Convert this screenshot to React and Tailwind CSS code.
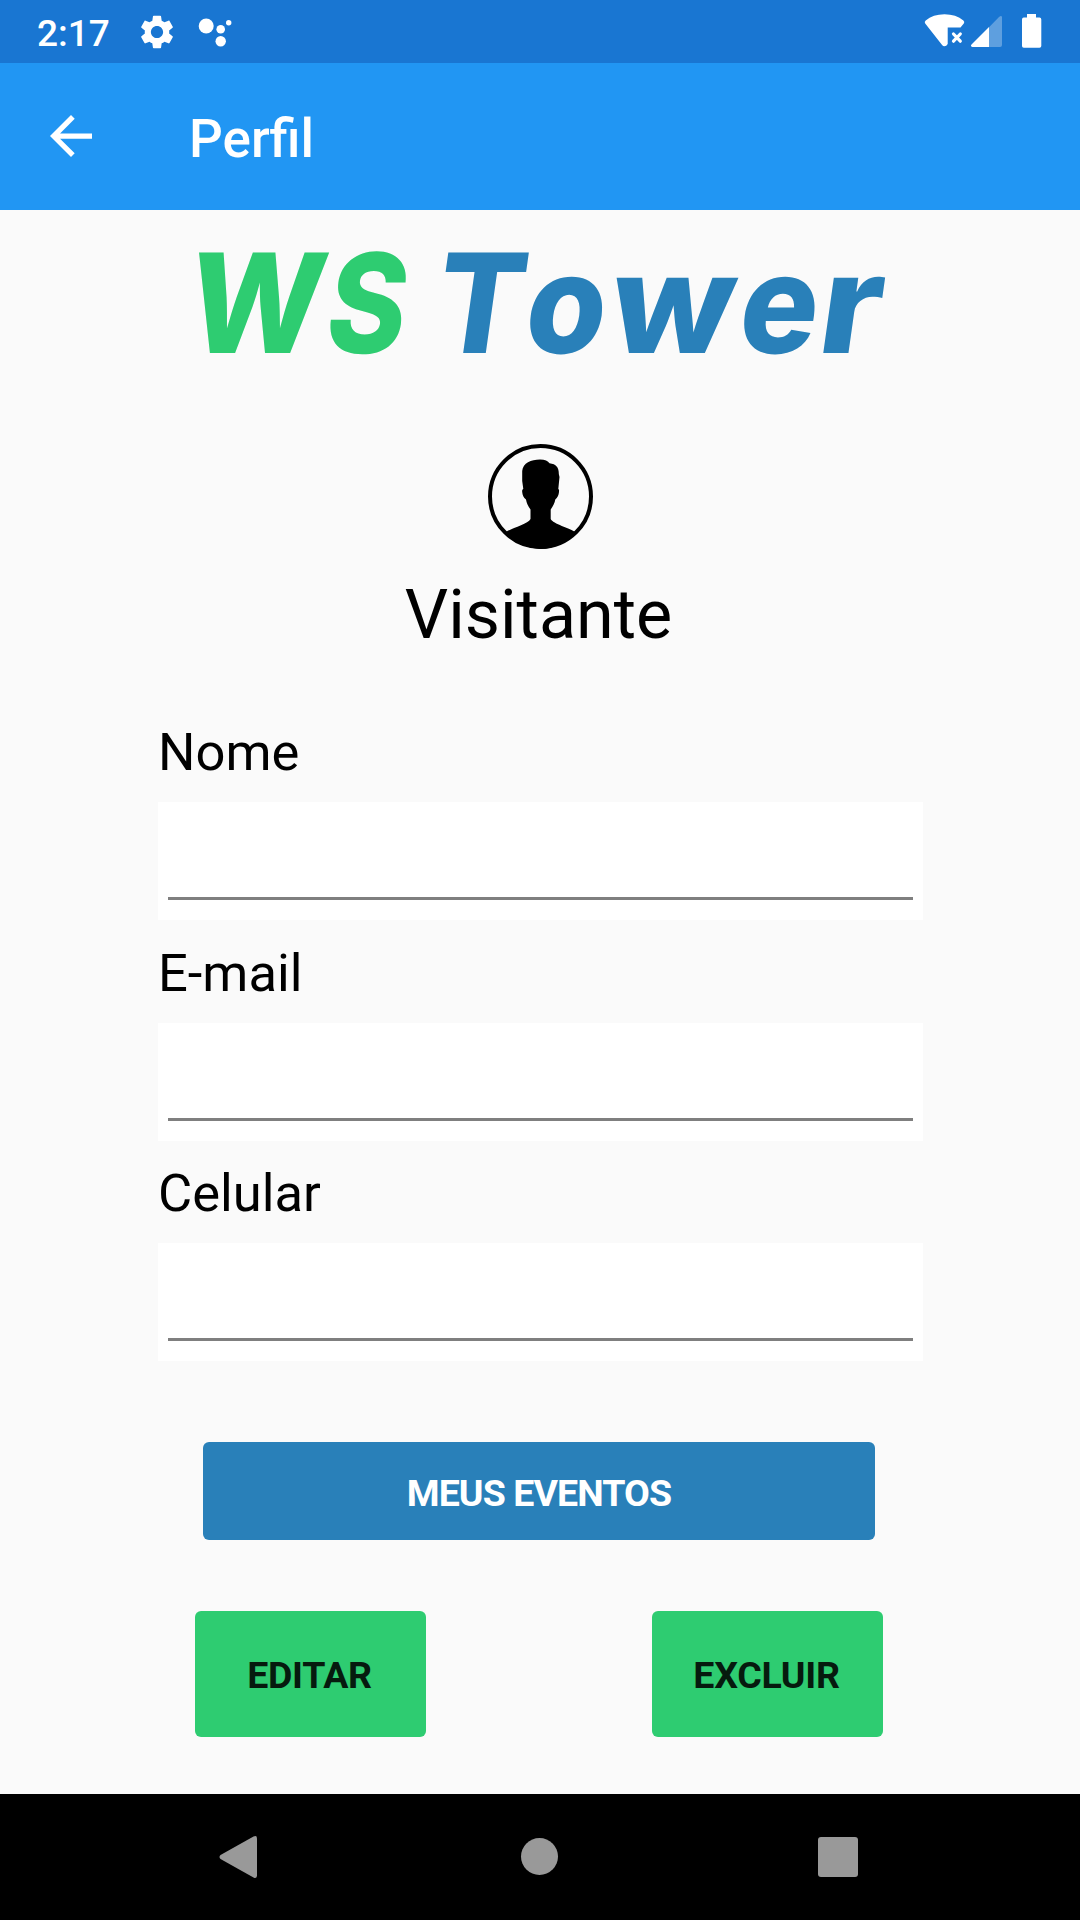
const FIELDS = [
  { label: "Nome", gap: "mt-[57px]" },
  { label: "E-mail", gap: "mt-[18px]" },
  { label: "Celular", gap: "mt-[17px]" },
];

const LOGO_LETTERS = [
  { char: "W", x: -15, width: 136, color: "#2ecc71" },
  { char: "S", x: 125, width: 79, color: "#2ecc71" },
  { char: "T", x: 233, width: 89, color: "#2980b9" },
  { char: "o", x: 324, width: 80, color: "#2980b9" },
  { char: "w", x: 408, width: 124, color: "#2980b9" },
  { char: "e", x: 538, width: 78, color: "#2980b9" },
  { char: "r", x: 618, width: 62, color: "#2980b9" },
];

function StatusBar() {
  return (
    <div className="flex h-[63px] items-center bg-[#1976d2] text-white">
      <span className="ml-[37px] w-[74px] whitespace-nowrap text-[37px] font-medium leading-[63px]">
        <span className="relative top-[2px]">2:17</span>
      </span>
      <svg className="ml-[29px] size-[34px]" viewBox="2 2 20 20" fill="currentColor">
        <path d="M19.14 12.94c.04-.3.06-.61.06-.94 0-.32-.02-.64-.07-.94l2.03-1.58c.18-.14.23-.41.12-.61l-1.92-3.32c-.12-.22-.37-.29-.59-.22l-2.39.96c-.5-.38-1.03-.7-1.62-.94l-.36-2.54c-.04-.24-.24-.41-.48-.41h-3.84c-.24 0-.43.17-.47.41l-.36 2.54c-.59.24-1.13.57-1.62.94l-2.39-.96c-.22-.08-.47 0-.59.22L2.74 8.87c-.12.21-.08.47.12.61l2.03 1.58c-.05.3-.09.63-.09.94s.02.64.07.94l-2.03 1.58c-.18.14-.23.41-.12.61l1.92 3.32c.12.22.37.29.59.22l2.39-.96c.5.38 1.03.7 1.62.94l.36 2.54c.05.24.24.41.48.41h3.84c.24 0 .44-.17.47-.41l.36-2.54c.59-.24 1.13-.56 1.62-.94l2.39.96c.22.08.47 0 .59-.22l1.92-3.32c.12-.22.07-.47-.12-.61l-2.01-1.58zM12 15.6c-1.98 0-3.6-1.62-3.6-3.6s1.62-3.6 3.6-3.6 3.6 1.62 3.6 3.6-1.62 3.6-3.6 3.6z" />
      </svg>
      <svg className="ml-[23px] h-[63px] w-[36px]" viewBox="197 0 36 63" fill="currentColor">
        <circle cx="206.2" cy="26" r="7.5" />
        <circle cx="220.7" cy="29.2" r="4.3" />
        <circle cx="220.7" cy="41.3" r="5.2" />
        <circle cx="228.7" cy="22.7" r="2.7" />
      </svg>
      <svg className="ml-auto mr-[37px] h-[63px] w-[120px]" viewBox="923 0 120 63" fill="currentColor">
        <path d="M925.2 23.4 Q924 21.7 925.7 20.4 Q933 14.3 944.5 14.3 Q956 14.3 963.4 20.4 Q965 21.7 963.8 23.4 L960.5 27.5 H947.7 V44 Q946.5 46.3 944.4 46.3 Q943 46.3 941.9 44.8 Z" />
        <path d="M953.5 34 L960.3 41.2 M960.3 34 L953.5 41.2" stroke="currentColor" strokeWidth="3.2" strokeLinecap="round" />
        <path d="M1002 16.6 V45 Q1002 47 1000 47 H989 V27.3 L999 17 Q1001.5 14.8 1002 17" opacity="0.3" />
        <path d="M989 27 V47 H972.3 Q970 46.3 971.5 44.5 Z" />
        <path d="M1027 14 H1036 V17.6 H1039.5 Q1041.3 17.6 1041.3 19.4 V46 Q1041.3 47.8 1039.5 47.8 H1023.8 Q1022 47.8 1022 46 V19.4 Q1022 17.6 1023.8 17.6 H1027 Z" />
      </svg>
    </div>
  );
}

function AppBar() {
  return (
    <header className="flex h-[147px] items-center bg-[#2196f3] text-white">
      <button className="-mt-[1px] ml-[50px] size-[42px]" aria-label="Voltar">
        <svg className="size-[42px]" viewBox="4 4 16 16" fill="currentColor">
          <path d="M20 11H7.83l5.59-5.59L12 4l-8 8 8 8 1.41-1.41L7.83 13H20v-2z" />
        </svg>
      </button>
      <h1 className="ml-[97px] mt-[4px] text-[53px] font-medium leading-[70px]">Perfil</h1>
    </header>
  );
}

function Logo() {
  return (
    <svg
      className="h-[101px] w-[687px] overflow-visible font-[Inter,sans-serif] text-[138px] font-extrabold"
      viewBox="0 0 687 101"
      aria-label="WS Tower"
    >
      {LOGO_LETTERS.map(({ char, x, width, color }) => (
        <text
          key={char}
          transform={`translate(${x} 100.5) skewX(-8)`}
          textLength={width}
          lengthAdjust="spacingAndGlyphs"
          fill={color}
        >
          {char}
        </text>
      ))}
    </svg>
  );
}

function Avatar() {
  return (
    <svg className="mt-[91px] size-[105px]" viewBox="0 0 105 105">
      <circle cx="52.5" cy="52.5" r="50.5" fill="none" stroke="#000" strokeWidth="4" />
      <path d="M18 88 C24 84 40 80 42.5 75 V65.5 C40 62 38.5 59 38 55.5 C35.5 54 34.5 51 34.2 48 C34 46 34.5 45.5 35.3 45 L34.2 37 V27 C35 19 43 15.5 52 15.5 C57 15.5 60 17 61.5 19.3 C68.5 20 71 24 70.8 30 L71.5 33 L70.3 45 C71 45.5 71.2 46 71 48 C70.7 51 69.5 54 67.3 55.5 C66.8 59 65 62 62.7 65.5 V75 C65 80 82 84 87 88 C78 98 66 105 52.5 105 C39 105 27 98 18 88 Z" />
    </svg>
  );
}

function Field({ label, gap }) {
  return (
    <label className={gap + " block"}>
      <span className="block text-[52.5px] leading-[70px]">{label}</span>
      <span className="mt-[15px] flex h-[118px] flex-col justify-end bg-white px-[10px] pb-[20px]">
        <span className="h-[3px] bg-[#7f7f7f]" />
      </span>
    </label>
  );
}

function NavBar() {
  return (
    <nav className="flex h-[126px] items-center bg-black text-[#999999]">
      <svg className="ml-[219px] h-[42px] w-[38px]" viewBox="0 0 38 42" fill="currentColor">
        <path d="M34.5 0.6 Q38 -1 38 2.5 V39.5 Q38 43 34.5 41.4 L1.5 23 Q-0.5 21 1.5 19 Z" />
      </svg>
      <span className="-mt-px ml-[264px] size-[37px] rounded-full bg-[#999999]" />
      <span className="ml-[260px] size-[40px] rounded-[3px] bg-[#999999]" />
    </nav>
  );
}

export default function App() {
  return (
    <div className="flex h-[1920px] w-[1080px] flex-col overflow-hidden bg-[#fafafa] font-[Roboto,sans-serif] text-black">
      <StatusBar />
      <AppBar />
      <main className="flex flex-1 flex-col items-center pt-[42px]">
        <Logo />
        <Avatar />
        <h2 className="mr-[3px] mt-[21px] text-[68.25px] leading-[90px]">Visitante</h2>
        <form className="ml-px w-[765px]">
          {FIELDS.map((field) => (
            <Field key={field.label} {...field} />
          ))}
        </form>
        <button className="mr-[2px] mt-[81px] h-[98px] w-[672px] rounded-[6px] bg-[#2980b9] pt-[5px] text-[37.5px] font-bold tracking-[-0.9px] text-white">
          MEUS EVENTOS
        </button>
        <div className="mr-[2px] mt-[71px] flex w-[688px] justify-between text-[37.5px] font-bold tracking-[-0.3px] text-[#061a0e]">
          <button className="h-[126px] w-[231px] rounded-[6px] bg-[#2ecc71] pr-[2px] pt-[3px]">EDITAR</button>
          <button className="h-[126px] w-[231px] rounded-[6px] bg-[#2ecc71] pr-[2px] pt-[3px]">EXCLUIR</button>
        </div>
      </main>
      <NavBar />
    </div>
  );
}
